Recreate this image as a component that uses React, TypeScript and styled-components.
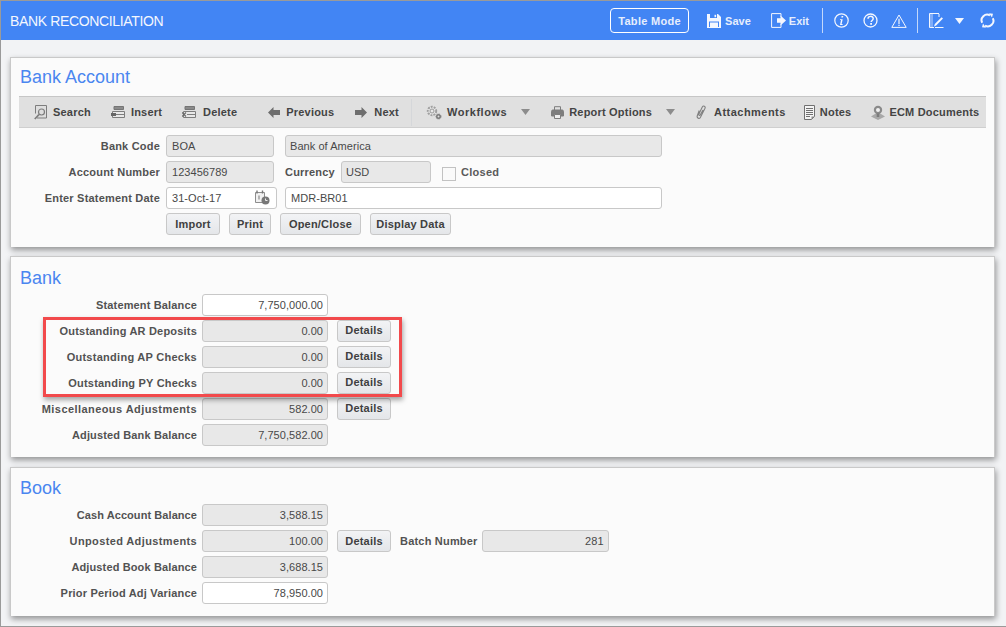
import styled, { createGlobalStyle } from 'styled-components'

const GlobalStyle = createGlobalStyle`
  html, body {
    margin: 0;
    padding: 0;
    background: #f2f3f5;
  }
  body {
    font-family: "Liberation Sans", Arial, sans-serif;
    font-size: 11px;
    color: #444;
  }
`

const Page = styled.div`
  width: 1006px;
  height: 627px;
  box-sizing: border-box;
  overflow: hidden;
  border-top: 1px solid #9a9a9a;
  border-left: 1px solid #9a9a9a;
  border-bottom: 1px solid #9a9a9a;
  background: #f2f3f5;
`

const Header = styled.header`
  height: 39px;
  background: #4285f4;
  display: flex;
  align-items: center;
  padding: 0 11px 0 9px;
  color: #fff;
`

const Title = styled.div`
  flex: 1;
  font-size: 14px;
  letter-spacing: -0.35px;
  color: #f4f7fe;
`

const ModeButton = styled.div`
  width: 79px;
  height: 25px;
  box-sizing: border-box;
  border: 1px solid #fff;
  border-radius: 4px;
  display: flex;
  align-items: center;
  justify-content: center;
  font-weight: bold;
  letter-spacing: 0.3px;
  color: #e6eefd;
`

const HeaderAction = styled.div<{ $ml: number; $gap: number }>`
  display: flex;
  align-items: center;
  gap: ${(p) => p.$gap}px;
  margin-left: ${(p) => p.$ml}px;
  font-weight: bold;
  color: #e6eefd;
`

const HeaderDivider = styled.div<{ $ml: number }>`
  width: 1px;
  height: 25px;
  background: #c3d8fb;
  margin-left: ${(p) => p.$ml}px;
`

const HeaderIcon = styled.svg<{ $ml: number }>`
  display: block;
  margin-left: ${(p) => p.$ml}px;
  flex: none;
`

const Content = styled.main`
  display: flex;
  flex-direction: column;
  padding: 17px 11px 0 9px;
`

const Card = styled.section<{ $h: number; $mb: number }>`
  height: ${(p) => p.$h}px;
  margin-bottom: ${(p) => p.$mb}px;
  box-sizing: border-box;
  background: #fbfbfb;
  border: 1px solid #c9c9c9;
  border-bottom: 0;
  box-shadow: 1px 3px 6px rgba(0, 0, 0, 0.4);
  padding: 8px 8px 0 8px;
`

const CardTitle = styled.h2<{ $mt?: number }>`
  margin: ${(p) => p.$mt ?? 0}px 0 0 1px;
  height: 22px;
  line-height: 22px;
  font-size: 18px;
  font-weight: normal;
  color: #4a86f0;
`

const Toolbar = styled.div`
  display: flex;
  align-items: center;
  height: 32px;
  margin-top: 8px;
  box-sizing: border-box;
  background: #e0e0e0;
  border-top: 1px solid #c6c6c6;
  border-bottom: 1px solid #cfcfcf;
`

const ToolItem = styled.div<{ $ml: number; $gap?: number; $ls?: number }>`
  display: flex;
  align-items: center;
  gap: ${(p) => p.$gap ?? 5}px;
  margin-left: ${(p) => p.$ml}px;
  font-weight: bold;
  letter-spacing: ${(p) => p.$ls ?? 0.2}px;
  color: #444;
  white-space: nowrap;
`

const ToolDivider = styled.div<{ $ml: number }>`
  width: 1px;
  height: 27px;
  background: #d5d7da;
  margin-left: ${(p) => p.$ml}px;
`

const Caret = styled.svg<{ $ml: number }>`
  display: block;
  margin-left: ${(p) => p.$ml}px;
`

const Form = styled.div<{ $mt: number }>`
  display: flex;
  flex-direction: column;
  gap: 4px;
  margin-top: ${(p) => p.$mt}px;
`

const Row = styled.div`
  display: flex;
  align-items: center;
  height: 22px;
`

const Label = styled.label<{ $w: number; $ls?: number }>`
  width: ${(p) => p.$w}px;
  flex: none;
  text-align: right;
  font-weight: bold;
  letter-spacing: ${(p) => p.$ls ?? 0.2}px;
  color: #525252;
  white-space: nowrap;
`

const InlineLabel = styled.label<{ $ml: number; $mr: number }>`
  margin-left: ${(p) => p.$ml}px;
  margin-right: ${(p) => p.$mr}px;
  font-weight: bold;
  letter-spacing: 0.2px;
  color: #525252;
  white-space: nowrap;
`

const Field = styled.div<{ $w: number; $ml?: number; $editable?: boolean; $right?: boolean; $pl?: number }>`
  width: ${(p) => p.$w}px;
  height: 22px;
  margin-left: ${(p) => p.$ml ?? 0}px;
  box-sizing: border-box;
  flex: none;
  display: flex;
  align-items: center;
  justify-content: ${(p) => (p.$right ? 'flex-end' : 'flex-start')};
  padding: 0 4px 1px ${(p) => p.$pl ?? 5}px;
  background: ${(p) => (p.$editable ? '#fff' : '#e8e8e8')};
  border: 1px solid #c8c8c8;
  border-radius: 3px;
  letter-spacing: 0.05px;
  color: #484848;
  white-space: nowrap;
`

const Checkbox = styled.span`
  display: block;
  width: 12px;
  height: 12px;
  margin: 4px 5px 0 11px;
  background: #fafafa;
  border: 1px solid #c2c2c2;
`

const CheckLabel = styled.span`
  font-weight: bold;
  letter-spacing: 0.3px;
  color: #5a5a5a;
`

const DateIcon = styled.svg`
  margin-left: auto;
  margin-right: 2px;
`

const ActionButton = styled.button<{ $w: number; $ml?: number; $raised?: boolean }>`
  width: ${(p) => p.$w}px;
  height: 22px;
  margin: 0 0 0 ${(p) => p.$ml ?? 0}px;
  padding: 0 0 ${(p) => (p.$raised ? 2 : 0)}px;
  flex: none;
  box-sizing: border-box;
  font-family: inherit;
  font-size: 11px;
  font-weight: bold;
  letter-spacing: 0.2px;
  color: #404040;
  background: linear-gradient(#f2f3f5, #e4e6e9);
  border: 1px solid #c8c8c8;
  border-radius: 3px;
`

const Highlighted = styled.div`
  position: relative;
  display: flex;
  flex-direction: column;
  gap: 4px;
`

const HighlightBox = styled.div`
  position: absolute;
  left: 24px;
  top: -3px;
  width: 359px;
  height: 80px;
  box-sizing: border-box;
  border: 3px solid #f24a4c;
  box-shadow: 1px 3px 5px rgba(0, 0, 0, 0.35);
  pointer-events: none;
`

const w = '#f4f7fe'
const g = '#7d7d7d'

const IconSave = () => (
  <svg width="14" height="14" viewBox="0 0 14 14">
    <path d="M0 0h11l3 3v11H0z" fill={w} />
    <path d="M3 0h7v4H3z" fill="#4285f4" />
    <path d="M7.500 .8h1.600v2.400H7.500z" fill={w} />
    <path d="M2 7.500h10V13H2z" fill="#4285f4" />
    <path d="M3 8.500h8V13H3z" fill={w} />
  </svg>
)

const IconExit = () => (
  <svg width="15" height="15" viewBox="0 0 15 15">
    <path d="M10 4V.6H.6v13.800H10V11" fill="none" stroke={w} />
    <path d="M6 5.200h3.500V2.500L15 7.500l-5.500 5V9.800H6z" fill={w} />
  </svg>
)

const IconInfo = () => (
  <HeaderIcon $ml={11} width="15" height="15" viewBox="0 0 15 15">
    <circle cx="7.500" cy="7.500" r="6.700" fill="none" stroke={w} strokeWidth="1.200" />
    <path d="M7.600 3h1.700l-.3 1.500H7.300zM6 6.200h2.700L7.600 11h1v.9H6l1-4.800H6z" fill={w} />
  </HeaderIcon>
)

const IconHelp = () => (
  <HeaderIcon $ml={14} width="15" height="15" viewBox="0 0 15 15">
    <circle cx="7.500" cy="7.500" r="6.500" fill="none" stroke={w} strokeWidth="1.300" />
    <path d="M5 5.800c0-3.200 5.200-3.200 5.200-.2 0 1.900-2 1.800-2 3.500" fill="none" stroke={w} strokeWidth="1.500" />
    <path d="M7.200 10h1.800v1.800H7.200z" fill={w} />
  </HeaderIcon>
)

const IconWarn = () => (
  <HeaderIcon $ml={13} width="16" height="14" viewBox="0 0 16 14">
    <path d="M8 1 15.200 13.400H.8z" fill="none" stroke={w} />
    <path d="M7.400 4.800h1.200V10H7.400zM7.400 10.800h1.200V12H7.400z" fill={w} />
  </HeaderIcon>
)

const IconPage = () => (
  <HeaderIcon $ml={11} width="15" height="15" viewBox="0 0 15 15">
    <path d="M10 .5H.5v14H5" fill="none" stroke={w} />
    <path d="M1 1h3v13H1z" fill={w} opacity=".35" />
    <path d="M10 1v3" stroke={w} />
    <path d="M5 13.500l.8-2.500L12.600 4.200 14 5.600l-6.800 6.900zM6 14h8.500v.9H6z" fill={w} />
  </HeaderIcon>
)

const IconRefresh = () => (
  <HeaderIcon $ml={16} width="15" height="15" viewBox="0 0 15 15">
    <path d="M2.200 9.800A5.600 5.600 0 0 1 10 2.400" fill="none" stroke={w} strokeWidth="2" />
    <path d="M12.800 5.200A5.600 5.600 0 0 1 5 12.600" fill="none" stroke={w} strokeWidth="2" />
    <path d="M9 .2l4 .6-1 3.600zM6 14.800l-4-.6 1-3.600z" fill={w} />
  </HeaderIcon>
)

const IconSearch = () => (
  <svg width="14" height="15" viewBox="0 0 14 15">
    <path d="M1.500.5h11v12.500H3" fill="#dedede" stroke={g} />
    <path d="M1.500.5v8" stroke={g} />
    <circle cx="7.500" cy="7" r="3" fill="none" stroke={g} strokeWidth="1.200" />
    <path d="M5 9.500.8 14" stroke={g} strokeWidth="1.800" />
  </svg>
)

const IconRows = ({ del }: { del?: boolean }) => (
  <svg width="15" height="13" viewBox="0 0 15 13">
    <path d="M3 .5h9.500v3H3z" fill="#8a8a8a" stroke="#757575" />
    <path d="M1.500 5.500h12v6h-12z" fill="#e8e8e8" stroke={g} />
    <path d="M5 8.500h8" stroke={g} />
    {del ? (
      <path d="M0 6.500l4 4M4 6.500l-4 4" stroke="#6a6a6a" strokeWidth="1.200" />
    ) : (
      <path d="M0 7h5v3H0z" fill="#666" />
    )}
  </svg>
)

const IconArrow = ({ left }: { left?: boolean }) => (
  <svg width="12" height="11" viewBox="0 0 12 11">
    <path d={left ? 'M0 5.500 5.500 0v3H12v5H5.500v3z' : 'M12 5.500 6.500 0v3H0v5h6.500v3z'} fill="#6e6e6e" />
  </svg>
)

const IconGears = () => (
  <svg width="16" height="15" viewBox="0 0 16 15">
    <circle cx="6" cy="6" r="4.200" fill="#e8e8e8" stroke="#a0a0a0" strokeWidth="2" strokeDasharray="2 1" />
    <circle cx="6" cy="6" r="2" fill="none" stroke="#999" />
    <circle cx="12.500" cy="11.500" r="2.500" fill="#777" stroke="#8a8a8a" strokeDasharray="1.500 .8" />
    <circle cx="12.500" cy="11.500" r="1" fill="#ddd" />
  </svg>
)

const IconPrint = () => (
  <svg width="13" height="13" viewBox="0 0 13 13">
    <path d="M3.500 4V.7h6V4" fill="none" stroke={g} />
    <path d="M.5 5.500c0-1 .6-1.500 1.500-1.500h9c.9 0 1.500.5 1.500 1.500V10h-2.500V8h-7v2H.5z" fill={g} stroke={g} />
    <path d="M3.500 8.500h6v4h-6z" fill="#eee" stroke={g} />
  </svg>
)

const IconClip = () => (
  <svg width="11" height="15" viewBox="0 0 11 15">
    <path d="M3.200 5.500 1.300 10.800c-.8 2.200 2.300 3.600 3.300 1.300L9 3.200C9.800 1.400 7.400 0 6.300 2L2.800 9.300c-.4 1 .9 1.600 1.400.7L7 5" fill="none" stroke="#808080" strokeWidth="1.100" />
  </svg>
)

const IconNotes = () => (
  <svg width="11" height="15" viewBox="0 0 11 15">
    <path d="M.5.500h10v11l-3 3h-7z" fill="#f4f4f4" stroke="#707070" />
    <path d="M2 3.500h7M2 5.500h7M2 7.500h7M2 9.500h7M2 11.500h4" stroke="#707070" />
    <path d="M7.500 14.500v-3h3z" fill="#8a8a8a" />
  </svg>
)

const IconEcm = () => (
  <svg width="14" height="15" viewBox="0 0 14 15">
    <path d="M0 11.500 4 9h6l4 2.500L7 15z" fill="#a8a8a8" />
    <circle cx="7" cy="5" r="4.200" fill="#8a8a8a" />
    <circle cx="7" cy="5" r="2" fill="#f0f0f0" />
    <path d="M5.700 8.500h2.600V12H5.700z" fill="#7b7b7b" />
  </svg>
)

const IconCalendar = () => (
  <DateIcon width="15" height="15" viewBox="0 0 15 15">
    <path d="M.5 2.500h9v10h-9z" fill="#f1f1f1" stroke="#8d8d8d" />
    <path d="M2 .5v3M7.500.5v3" stroke="#777" strokeWidth="1.400" />
    <path d="M3.500 5.500h1v4h-1z" fill="#777" />
    <circle cx="10.500" cy="10.500" r="4" fill="#777" />
    <path d="M10.500 8.500v2h2" fill="none" stroke="#eee" />
  </DateIcon>
)

const TriangleCaret = ({ ml }: { ml: number }) => (
  <Caret $ml={ml} width="9" height="6" viewBox="0 0 9 6">
    <path d="M0 0h9L4.500 6z" fill="#8c8c8c" />
  </Caret>
)

export default function App() {
  return (
    <Page>
      <GlobalStyle />
      <Header>
        <Title>BANK RECONCILIATION</Title>
        <ModeButton>Table Mode</ModeButton>
        <HeaderAction $ml={18} $gap={4}>
          <IconSave />
          Save
        </HeaderAction>
        <HeaderAction $ml={20} $gap={3}>
          <IconExit />
          Exit
        </HeaderAction>
        <HeaderDivider $ml={13} />
        <IconInfo />
        <IconHelp />
        <IconWarn />
        <HeaderDivider $ml={10} />
        <IconPage />
        <HeaderIcon $ml={11} width="9" height="6" viewBox="0 0 9 6">
          <path d="M0 0h9L4.500 6z" fill={w} />
        </HeaderIcon>
        <IconRefresh />
      </Header>
      <Content>
        <Card $h={190} $mb={9}>
          <CardTitle>Bank Account</CardTitle>
          <Toolbar>
            <ToolItem $ml={15}>
              <IconSearch />
              Search
            </ToolItem>
            <ToolItem $ml={20}>
              <IconRows />
              Insert
            </ToolItem>
            <ToolItem $ml={20} $gap={6}>
              <IconRows del />
              Delete
            </ToolItem>
            <ToolItem $ml={31} $gap={6}>
              <IconArrow left />
              Previous
            </ToolItem>
            <ToolItem $ml={21} $gap={7}>
              <IconArrow />
              Next
            </ToolItem>
            <ToolDivider $ml={12} />
            <ToolItem $ml={14} $ls={0.53}>
              <IconGears />
              Workflows
            </ToolItem>
            <TriangleCaret ml={14} />
            <ToolItem $ml={21}>
              <IconPrint />
              Report Options
            </ToolItem>
            <TriangleCaret ml={14} />
            <ToolItem $ml={21} $gap={7} $ls={0.47}>
              <IconClip />
              Attachments
            </ToolItem>
            <ToolItem $ml={18}>
              <IconNotes />
              Notes
            </ToolItem>
            <ToolItem $ml={20} $gap={4}>
              <IconEcm />
              ECM Documents
            </ToolItem>
          </Toolbar>
          <Form $mt={7}>
            <Row>
              <Label $w={141}>Bank Code</Label>
              <Field $w={108} $ml={6}>BOA</Field>
              <Field $w={377} $ml={11} $pl={4}>Bank of America</Field>
            </Row>
            <Row>
              <Label $w={141}>Account Number</Label>
              <Field $w={108} $ml={6}>123456789</Field>
              <InlineLabel $ml={11} $mr={6}>Currency</InlineLabel>
              <Field $w={90} $pl={4}>USD</Field>
              <Checkbox />
              <CheckLabel>Closed</CheckLabel>
            </Row>
            <Row>
              <Label $w={141}>Enter Statement Date</Label>
              <Field $w={111} $ml={6} $editable>
                31-Oct-17
                <IconCalendar />
              </Field>
              <Field $w={377} $ml={8} $editable>MDR-BR01</Field>
            </Row>
            <Row>
              <ActionButton $w={54} $ml={147}>Import</ActionButton>
              <ActionButton $w={42} $ml={9}>Print</ActionButton>
              <ActionButton $w={81} $ml={9}>Open/Close</ActionButton>
              <ActionButton $w={81} $ml={9}>Display Data</ActionButton>
            </Row>
          </Form>
        </Card>
        <Card $h={201} $mb={10}>
          <CardTitle $mt={2}>Bank</CardTitle>
          <Form $mt={5}>
            <Row>
              <Label $w={178} $ls={0.15}>Statement Balance</Label>
              <Field $w={126} $ml={5} $right $editable>7,750,000.00</Field>
            </Row>
            <Highlighted>
              <Row>
                <Label $w={178}>Outstanding AR Deposits</Label>
                <Field $w={126} $ml={5} $right>0.00</Field>
                <ActionButton $w={54} $ml={9} $raised>Details</ActionButton>
              </Row>
              <Row>
                <Label $w={178} $ls={0.27}>Outstanding AP Checks</Label>
                <Field $w={126} $ml={5} $right>0.00</Field>
                <ActionButton $w={54} $ml={9} $raised>Details</ActionButton>
              </Row>
              <Row>
                <Label $w={178}>Outstanding PY Checks</Label>
                <Field $w={126} $ml={5} $right>0.00</Field>
                <ActionButton $w={54} $ml={9} $raised>Details</ActionButton>
              </Row>
              <HighlightBox />
            </Highlighted>
            <Row>
              <Label $w={178} $ls={0.43}>Miscellaneous Adjustments</Label>
              <Field $w={126} $ml={5} $right>582.00</Field>
              <ActionButton $w={54} $ml={9} $raised>Details</ActionButton>
            </Row>
            <Row>
              <Label $w={178} $ls={0.13}>Adjusted Bank Balance</Label>
              <Field $w={126} $ml={5} $right>7,750,582.00</Field>
            </Row>
          </Form>
        </Card>
        <Card $h={149} $mb={0}>
          <CardTitle $mt={1}>Book</CardTitle>
          <Form $mt={5}>
            <Row>
              <Label $w={178} $ls={0.07}>Cash Account Balance</Label>
              <Field $w={126} $ml={5} $right>3,588.15</Field>
            </Row>
            <Row>
              <Label $w={178} $ls={0.37}>Unposted Adjustments</Label>
              <Field $w={126} $ml={5} $right>100.00</Field>
              <ActionButton $w={54} $ml={9}>Details</ActionButton>
              <InlineLabel $ml={9} $mr={4}>Batch Number</InlineLabel>
              <Field $w={127} $right>281</Field>
            </Row>
            <Row>
              <Label $w={178} $ls={0.13}>Adjusted Book Balance</Label>
              <Field $w={126} $ml={5} $right>3,688.15</Field>
            </Row>
            <Row>
              <Label $w={178} $ls={0.19}>Prior Period Adj Variance</Label>
              <Field $w={126} $ml={5} $right $editable>78,950.00</Field>
            </Row>
          </Form>
        </Card>
      </Content>
    </Page>
  )
}
